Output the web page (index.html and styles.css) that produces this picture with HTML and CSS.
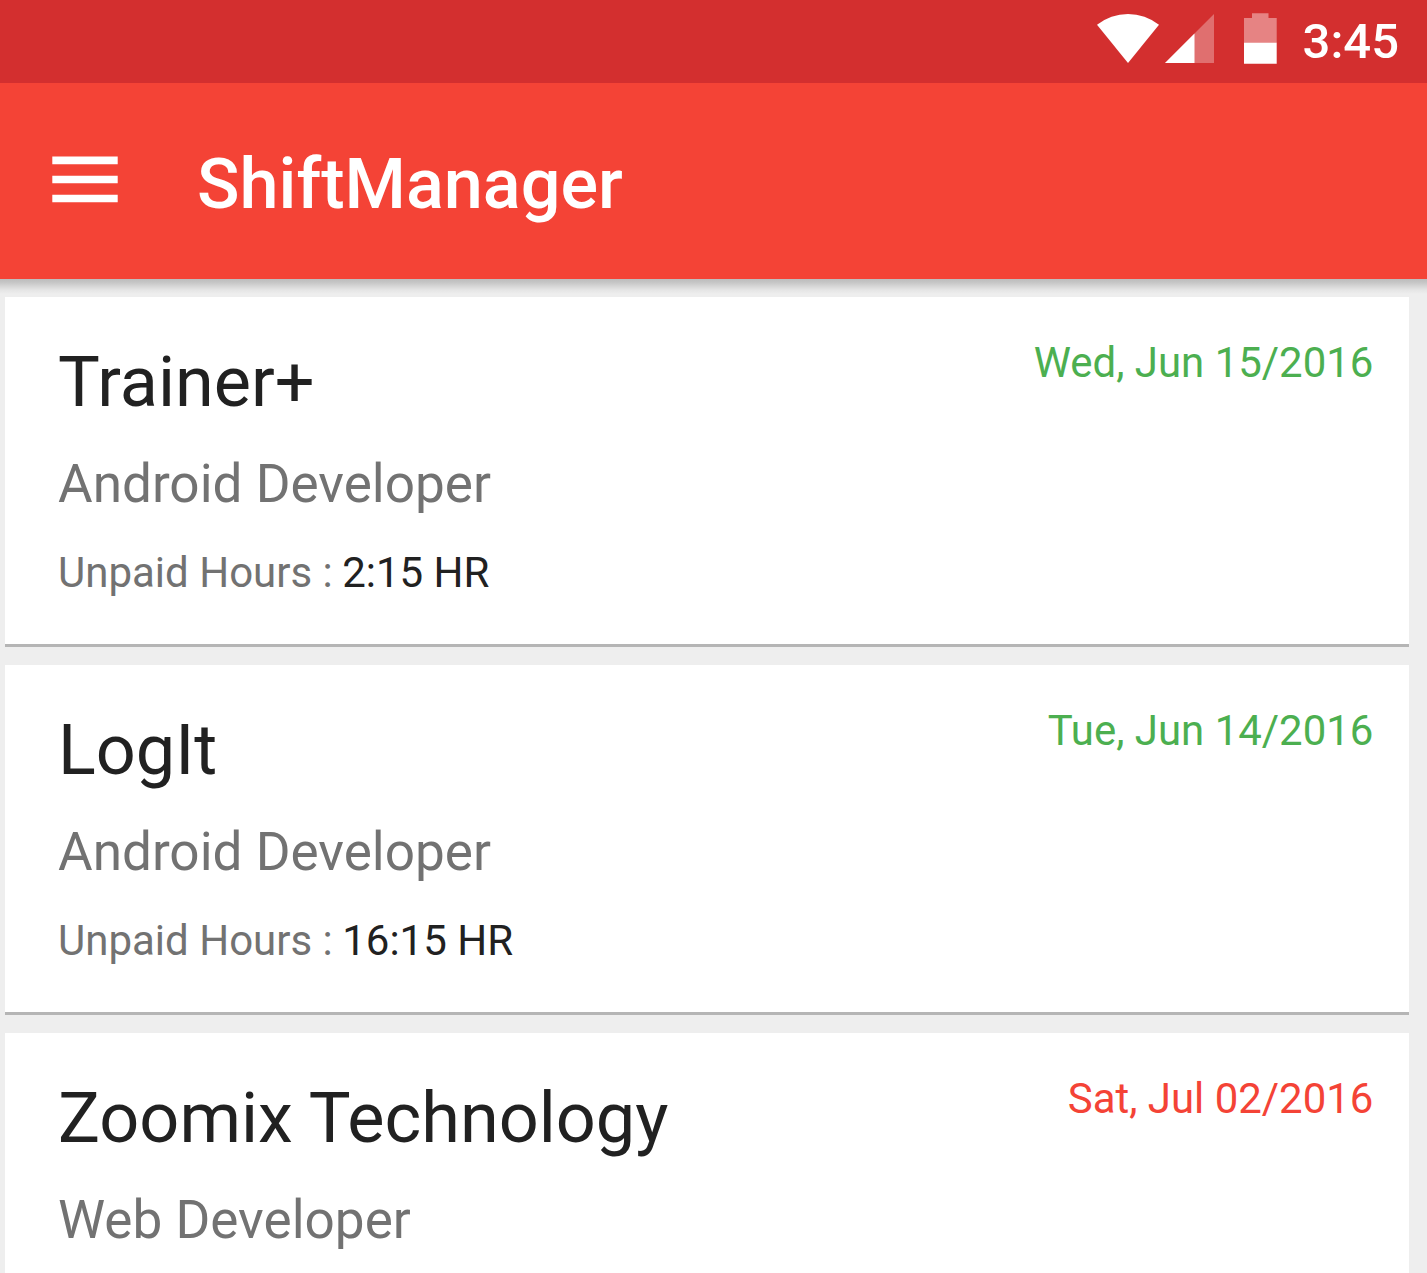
FILE: index.html
```html
<!DOCTYPE html>
<html lang="en">
<head>
<meta charset="utf-8">
<title>ShiftManager</title>
<link rel="stylesheet" href="styles.css">
</head>
<body>
<div class="status-bar">
  <svg class="status-icons" width="190" height="64" viewBox="0 0 190 64">
    <path d="M7 24.800A49.500 49.500 0 0 1 69 24.800L38 63Z" fill="#fff"/>
    <path d="M124 14V63H75Z" fill="#e06f6f"/>
    <path d="M104.500 33.500V63H75Z" fill="#fff"/>
    <path d="M162 13.300H178.500V18H186.700V43H154V18H162Z" fill="#e68383"/>
    <path d="M154 42.700H186.700V63.700H154Z" fill="#fff"/>
  </svg>
  <span class="clock">3:45</span>
</div>
<header class="app-bar">
  <svg class="menu" width="66" height="48" viewBox="0 0 66 48"><path d="M.3 4.400H65.700M.3 23.500H65.700M.3 42.500H65.700" stroke="#fff" stroke-width="7.600"/></svg>
  <h1 class="title">ShiftManager</h1>
</header>
<main class="list">
  <article class="card">
    <div class="info">
      <h2 class="company">Trainer+</h2>
      <p class="role">Android Developer</p>
      <p class="hours">Unpaid Hours : <span class="amount">2:15 HR</span></p>
    </div>
    <time class="date">Wed, Jun 15/2016</time>
  </article>
  <article class="card">
    <div class="info">
      <h2 class="company">LogIt</h2>
      <p class="role">Android Developer</p>
      <p class="hours">Unpaid Hours : <span class="amount">16:15 HR</span></p>
    </div>
    <time class="date">Tue, Jun 14/2016</time>
  </article>
  <article class="card card-last">
    <div class="info">
      <h2 class="company">Zoomix Technology</h2>
      <p class="role">Web Developer</p>
    </div>
    <time class="date overdue">Sat, Jul 02/2016</time>
  </article>
</main>
</body>
</html>
```
FILE: styles.css
```css
* { box-sizing: border-box; margin: 0; }
body {
  display: flex;
  flex-direction: column;
  height: 100vh;
  overflow: hidden;
  background: #eee;
  font-family: Roboto, "Liberation Sans", sans-serif;
}
.status-bar {
  display: flex;
  flex: none;
  justify-content: flex-end;
  height: 83px;
  padding-right: 28px;
  background: #d32f2f;
}
.status-icons { margin-right: 23px; }
.clock {
  color: #fff;
  font-size: 49px;
  font-weight: 500;
  line-height: 83px;
}
.app-bar {
  display: flex;
  flex: none;
  height: 196px;
  padding-left: 52px;
  background: #f44336;
}
.menu { margin: 73px 79px 0 0; }
.title {
  color: #fff;
  font-size: 70.2px;
  font-weight: 500;
  line-height: 202px;
}
.list {
  display: flex;
  flex: 1;
  flex-direction: column;
  gap: 18px;
  min-height: 0;
  padding: 18px 18px 0 5px;
  background: linear-gradient(#bdbdbd, #c4c4c4 3px, #d5d5d5 7px, #e5e5e5 11px, #eee 15px);
}
.card {
  display: flex;
  flex: none;
  justify-content: space-between;
  height: 350px;
  padding: 42px 35.6px 0 53px;
  background: #fff;
  border-bottom: 3px solid #b5b5b5;
}
.card-last {
  flex: 1;
  height: auto;
  border-bottom: 0;
}
.company {
  color: #212121;
  font-size: 70.2px;
  font-weight: 400;
  line-height: 86px;
}
.role {
  margin-top: 27px;
  color: #727272;
  font-size: 53.1px;
  line-height: 64px;
}
.hours {
  margin-top: 33px;
  color: #727272;
  font-size: 42px;
  line-height: 48px;
}
.amount {
  margin-left: -1px;
  color: #212121;
}
.date {
  color: #4caf50;
  font-size: 41.95px;
  line-height: 48px;
}
.overdue { color: #f44336; }
```
